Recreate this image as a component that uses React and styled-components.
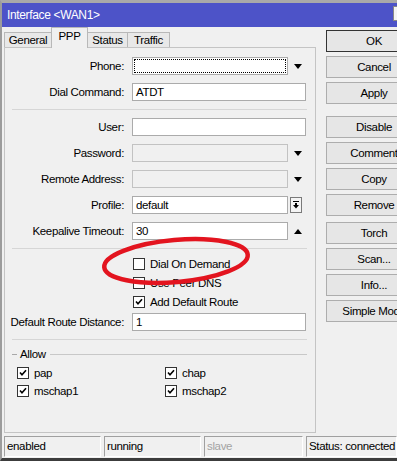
import React from 'react'
import styled, { createGlobalStyle, css } from 'styled-components'

const GlobalStyle = createGlobalStyle`
  html, body {
    margin: 0;
    padding: 0;
    background: #f0f0f0;
  }
  body {
    font-family: "Liberation Sans", Arial, sans-serif;
    font-size: 11.5px;
    letter-spacing: -0.35px;
    color: #000;
  }
`

const Window = styled.div`
  position: relative;
  width: 397px;
  height: 461px;
  box-sizing: border-box;
  overflow: hidden;
  border-top: 3px solid #a9a9a9;
  border-left: 2px solid #9c9c9c;
  border-bottom: 3px solid #3c3c3c;
  background: #f0f0f0;
  display: flex;
  flex-direction: column;
`

const TitleBar = styled.div`
  height: 24px;
  flex-shrink: 0;
  display: flex;
  align-items: center;
  padding-left: 5px;
  background: #4d53c8;
  color: #fff;
  font-size: 12px;
  white-space: nowrap;
`

const TitleText = styled.span`
  flex: 1;
`

const CloseBox = styled.div`
  width: 20px;
  height: 13px;
  margin-right: -18px;
  margin-top: -4px;
  flex-shrink: 0;
  background: #f4f4f4;
  border: 1px solid #888;
`

const Main = styled.div`
  flex: 1;
  display: flex;
  padding-left: 2px;
  min-height: 0;
`

const LeftColumn = styled.div`
  width: 312px;
  flex-shrink: 0;
  display: flex;
  flex-direction: column;
`

const Tabs = styled.div`
  height: 20px;
  display: flex;
  align-items: flex-end;
`

const Tab = styled.div`
  position: relative;
  box-sizing: border-box;
  width: ${p => p.width}px;
  height: 15px;
  line-height: 14px;
  text-align: center;
  background: #e8e8e8;
  border: 1px solid #b8b8b8;
  border-bottom: none;
  margin-left: -1px;
  &:first-child {
    margin-left: 0;
  }
  ${p => p.active && css`
    height: 21px;
    line-height: 17px;
    background: #f0f0f0;
    margin-bottom: -1px;
    z-index: 1;
  `}
`

const Panel = styled.div`
  position: relative;
  height: 386px;
  box-sizing: border-box;
  border: 1px solid #c4c4c4;
  padding-top: 9px;
`

const FieldRow = styled.div`
  display: flex;
  align-items: center;
  height: 18px;
  margin-bottom: 8px;
  margin-top: ${p => p.top || 0}px;
`

const Label = styled.div`
  width: 119px;
  text-align: right;
  white-space: nowrap;
  margin-right: 8px;
`

const Control = styled.div`
  width: 174px;
  height: 18px;
  display: flex;
  align-items: center;
`

const Input = styled.div`
  position: relative;
  flex: 1;
  height: 18px;
  box-sizing: border-box;
  border: 1px solid #ababab;
  background: ${p => (p.disabled ? '#f0f0f0' : '#fff')};
  border-color: ${p => (p.disabled ? '#c2c2c2' : '#ababab')};
  padding-left: 3px;
  line-height: 16px;
  ${p => p.focused && css`
    &::after {
      content: '';
      position: absolute;
      inset: 1px;
      border: 1px dotted #000;
    }
  `}
`

const ArrowSlot = styled.div`
  width: 18px;
  height: 18px;
  flex-shrink: 0;
  display: flex;
  align-items: center;
  justify-content: center;
  padding-left: 2px;
  box-sizing: border-box;
`

const MoreBox = styled.div`
  width: 12px;
  height: 16px;
  box-sizing: border-box;
  margin-right: 4px;
  border: 1px solid #7a7a7a;
  background: #f4f4f4;
  display: flex;
  align-items: center;
  justify-content: center;
`

const Separator = styled.div`
  height: 1px;
  background: #d6d6d6;
  margin: 0 8px 8px 7px;
`

const CheckList = styled.div`
  margin-top: -3px;
  padding-left: 128px;
`

const CheckRow = styled.div`
  display: flex;
  align-items: center;
  height: ${p => p.h || 19}px;
  white-space: nowrap;
`

const Box = styled.div`
  width: 12px;
  height: 12px;
  box-sizing: border-box;
  border: 1px solid #333;
  background: #fff;
  margin-right: 5px;
  flex-shrink: 0;
  display: flex;
  align-items: center;
  justify-content: center;
`

const Legend = styled.div`
  display: flex;
  align-items: center;
  height: 14px;
  margin: -1px 8px 0 7px;
  &::before {
    content: '';
    width: 5px;
    height: 1px;
    background: #a8a8a8;
  }
  &::after {
    content: '';
    flex: 1;
    height: 1px;
    background: #c8c8c8;
  }
`

const LegendText = styled.span`
  padding: 0 4px 0 3px;
`

const AllowGrid = styled.div`
  display: grid;
  grid-template-columns: 148px 1fr;
  margin-top: 3px;
  padding-left: 12px;
`

const Ellipse = styled.svg`
  position: absolute;
  left: 91px;
  top: 185px;
  overflow: visible;
  pointer-events: none;
`

const RightColumn = styled.div`
  width: 96px;
  flex-shrink: 0;
  margin-left: 10px;
  padding-top: 3px;
  display: flex;
  flex-direction: column;
`

const Button = styled.div`
  box-sizing: border-box;
  height: 22px;
  line-height: 20px;
  margin-bottom: 4px;
  margin-top: ${p => p.gap || 0}px;
  text-align: center;
  white-space: nowrap;
  background: #e6e6e6;
  border: 1px solid ${p => (p.primary ? '#333' : '#adadad')};
`

const StatusBar = styled.div`
  height: 21px;
  flex-shrink: 0;
  display: flex;
  gap: 3px;
  padding-left: 2px;
  margin-bottom: 1px;
`

const StatusCell = styled.div`
  box-sizing: border-box;
  width: ${p => (p.width ? p.width + 'px' : 'auto')};
  flex: ${p => (p.width ? '0 0 auto' : '1')};
  height: 21px;
  line-height: 19px;
  padding-left: 2px;
  white-space: nowrap;
  color: ${p => (p.muted ? '#a3a3a3' : '#000')};
  border: 1px solid;
  border-color: #a0a0a0 #fff #fff #a0a0a0;
`

const DownArrow = () => (
  <svg width='8' height='5' viewBox='0 0 8 5'>
    <polygon points='0,0 8,0 4,5' fill='#000' />
  </svg>
)

const UpArrow = () => (
  <svg width='8' height='5' viewBox='0 0 8 5'>
    <polygon points='0,5 8,5 4,0' fill='#000' />
  </svg>
)

const MoreIcon = () => (
  <svg width='6' height='8' viewBox='0 0 6 8'>
    <rect x='0' y='0' width='6' height='1' fill='#000' />
    <rect x='2' y='2' width='2' height='2' fill='#000' />
    <polygon points='0,4 6,4 3,7.5' fill='#000' />
  </svg>
)

const Tick = () => (
  <svg width='8' height='8' viewBox='0 0 8 8'>
    <path d='M1 3.5 L3 5.8 L7 1.2' stroke='#000' strokeWidth='1.6' fill='none' />
  </svg>
)

const Check = ({ checked, children, h }) => (
  <CheckRow h={h}>
    <Box>{checked && <Tick />}</Box>
    {children}
  </CheckRow>
)

const Field = ({ label, value, arrow, disabled, focused, top }) => (
  <FieldRow top={top}>
    <Label>{label}</Label>
    <Control>
      <Input disabled={disabled} focused={focused}>{value}</Input>
      {arrow === 'down' && <ArrowSlot><DownArrow /></ArrowSlot>}
      {arrow === 'up' && <ArrowSlot><UpArrow /></ArrowSlot>}
      {arrow === 'more' && <ArrowSlot><MoreBox><MoreIcon /></MoreBox></ArrowSlot>}
    </Control>
  </FieldRow>
)

export default function App () {
  return (
    <>
      <GlobalStyle />
      <Window>
        <TitleBar>
          <TitleText>Interface &lt;WAN1&gt;</TitleText>
          <CloseBox />
        </TitleBar>
        <Main>
          <LeftColumn>
            <Tabs>
              <Tab width={48}>General</Tab>
              <Tab width={37} active>PPP</Tab>
              <Tab width={41}>Status</Tab>
              <Tab width={43}>Traffic</Tab>
            </Tabs>
            <Panel>
              <Field label='Phone:' arrow='down' focused />
              <Field label='Dial Command:' value='ATDT' />
              <Separator />
              <Field label='User:' />
              <Field label='Password:' arrow='down' disabled />
              <Field label='Remote Address:' arrow='down' disabled />
              <Field label='Profile:' value='default' arrow='more' />
              <Field label='Keepalive Timeout:' value='30' arrow='up' />
              <Separator />
              <CheckList>
                <Check>Dial On Demand</Check>
                <Check>Use Peer DNS</Check>
                <Check checked>Add Default Route</Check>
              </CheckList>
              <Field label='Default Route Distance:' value='1' top={2} />
              <Separator />
              <Legend><LegendText>Allow</LegendText></Legend>
              <AllowGrid>
                <Check checked h={18}>pap</Check>
                <Check checked h={18}>chap</Check>
                <Check checked h={18}>mschap1</Check>
                <Check checked h={18}>mschap2</Check>
              </AllowGrid>
              <Ellipse width='160' height='56' viewBox='0 0 160 56'>
                <ellipse
                  cx='80' cy='28' rx='72' ry='21'
                  transform='rotate(-5 80 28)'
                  fill='none' stroke='#e3141f' strokeWidth='4.5'
                />
              </Ellipse>
            </Panel>
          </LeftColumn>
          <RightColumn>
            <Button primary>OK</Button>
            <Button>Cancel</Button>
            <Button>Apply</Button>
            <Button gap={8}>Disable</Button>
            <Button>Comment</Button>
            <Button>Copy</Button>
            <Button>Remove</Button>
            <Button gap={2}>Torch</Button>
            <Button>Scan...</Button>
            <Button>Info...</Button>
            <Button>Simple Mode</Button>
          </RightColumn>
        </Main>
        <StatusBar>
          <StatusCell width={97}>enabled</StatusCell>
          <StatusCell width={97}>running</StatusCell>
          <StatusCell width={99} muted>slave</StatusCell>
          <StatusCell>Status: connected</StatusCell>
        </StatusBar>
      </Window>
    </>
  )
}
